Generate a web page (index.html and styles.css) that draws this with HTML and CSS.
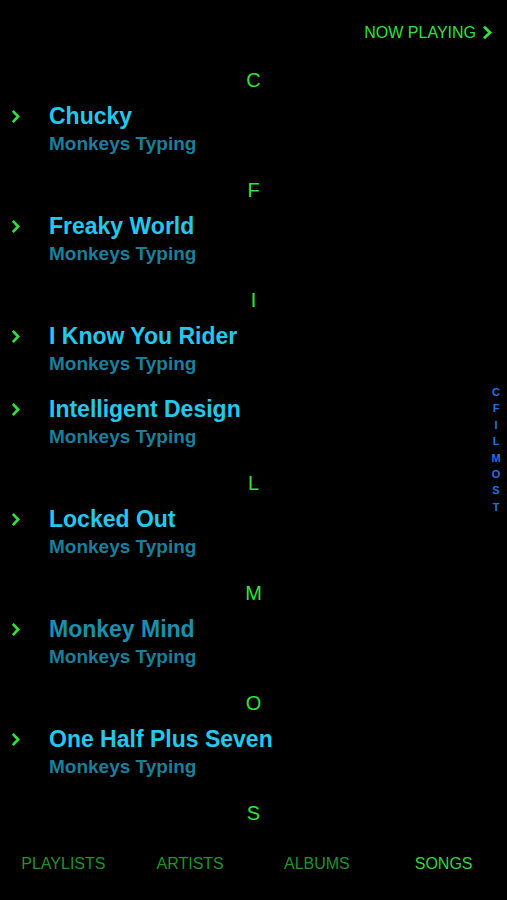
FILE: index.html
```html
<!DOCTYPE html>
<html lang="en">
<head>
  <meta charset="UTF-8" />
  <meta name="viewport" content="width=device-width, initial-scale=1.0"/>
  <title>Songs</title>
  <link rel="stylesheet" href="styles.css">
</head>
<body>
  <div class="screen">
    <div class="topbar">
      <span class="now-playing">NOW PLAYING</span>
      <svg class="top-chevron" width="11" height="15" viewBox="0 0 11 15">
        <path d="M2 1.8 L8 7.5 L2 13.2" fill="none" stroke="#2ee23c" stroke-width="2.8"/>
      </svg>
    </div>

    <div class="list">
      <div class="section-head">C</div>
      <div class="row">
        <svg class="chevron" width="10" height="15" viewBox="0 0 10 15"><path d="M1.8 1.8 L7.2 7.5 L1.8 13.2"/></svg>
        <div class="info">
          <div class="title">Chucky</div>
          <div class="artist">Monkeys Typing</div>
        </div>
      </div>

      <div class="section-head">F</div>
      <div class="row">
        <svg class="chevron" width="10" height="15" viewBox="0 0 10 15"><path d="M1.8 1.8 L7.2 7.5 L1.8 13.2"/></svg>
        <div class="info">
          <div class="title">Freaky World</div>
          <div class="artist">Monkeys Typing</div>
        </div>
      </div>

      <div class="section-head">I</div>
      <div class="row">
        <svg class="chevron" width="10" height="15" viewBox="0 0 10 15"><path d="M1.8 1.8 L7.2 7.5 L1.8 13.2"/></svg>
        <div class="info">
          <div class="title">I Know You Rider</div>
          <div class="artist">Monkeys Typing</div>
        </div>
      </div>
      <div class="row">
        <svg class="chevron" width="10" height="15" viewBox="0 0 10 15"><path d="M1.8 1.8 L7.2 7.5 L1.8 13.2"/></svg>
        <div class="info">
          <div class="title">Intelligent Design</div>
          <div class="artist">Monkeys Typing</div>
        </div>
      </div>

      <div class="section-head">L</div>
      <div class="row">
        <svg class="chevron" width="10" height="15" viewBox="0 0 10 15"><path d="M1.8 1.8 L7.2 7.5 L1.8 13.2"/></svg>
        <div class="info">
          <div class="title">Locked Out</div>
          <div class="artist">Monkeys Typing</div>
        </div>
      </div>

      <div class="section-head">M</div>
      <div class="row dim">
        <svg class="chevron" width="10" height="15" viewBox="0 0 10 15"><path d="M1.8 1.8 L7.2 7.5 L1.8 13.2"/></svg>
        <div class="info">
          <div class="title">Monkey Mind</div>
          <div class="artist">Monkeys Typing</div>
        </div>
      </div>

      <div class="section-head">O</div>
      <div class="row">
        <svg class="chevron" width="10" height="15" viewBox="0 0 10 15"><path d="M1.8 1.8 L7.2 7.5 L1.8 13.2"/></svg>
        <div class="info">
          <div class="title">One Half Plus Seven</div>
          <div class="artist">Monkeys Typing</div>
        </div>
      </div>

      <div class="section-head">S</div>
    </div>

    <div class="index-wrap">
      <div class="index">
        <span>C</span><span>F</span><span>I</span><span>L</span><span>M</span><span>O</span><span>S</span><span>T</span>
      </div>
    </div>

    <div class="tabbar">
      <div class="tab">PLAYLISTS</div>
      <div class="tab">ARTISTS</div>
      <div class="tab">ALBUMS</div>
      <div class="tab active">SONGS</div>
    </div>
  </div>
</body>
</html>
```

FILE: styles.css
```css
* {
  box-sizing: border-box;
}

body {
  margin: 0;
  background: #000;
  font-family: 'Liberation Sans', Arial, sans-serif;
}

.screen {
  position: relative;
  width: 507px;
  height: 900px;
  overflow: hidden;
  background: #000;
}

.topbar {
  height: 61px;
  display: flex;
  justify-content: flex-end;
  align-items: center;
  padding: 4px 14px 0 0;
}

.now-playing {
  color: #2ee23c;
  font-size: 16px;
  line-height: 20px;
}

.top-chevron {
  margin-left: 6px;
}

.list {
  height: 777px;
  overflow: hidden;
}

.section-head {
  height: 37px;
  line-height: 39px;
  text-align: center;
  color: #2ee23c;
  font-size: 20px;
}

.row {
  height: 73px;
  display: flex;
  align-items: flex-start;
  padding-top: 4px;
}

.chevron {
  margin: 7px 0 0 11px;
  flex-shrink: 0;
}

.chevron path {
  fill: none;
  stroke: #2ee23c;
  stroke-width: 2.6;
}

.info {
  margin-left: 28px;
}

.title {
  color: #22c8ee;
  font-size: 23px;
  font-weight: bold;
  line-height: 28px;
}

.artist {
  color: #1a7f9c;
  font-size: 19px;
  font-weight: bold;
  line-height: 27px;
}

.row.dim .title {
  color: #1a8fb0;
}

.index-wrap {
  position: absolute;
  top: 61px;
  bottom: 62px;
  right: 3px;
  width: 16px;
  display: flex;
  align-items: center;
  justify-content: center;
}

.index {
  display: flex;
  flex-direction: column;
  align-items: center;
}

.index span {
  color: #2072e4;
  font-size: 11px;
  font-weight: bold;
  line-height: 16.4px;
}

.tabbar {
  height: 62px;
  display: grid;
  grid-template-columns: repeat(4, 1fr);
  background: #000;
  padding-top: 16px;
}

.tab {
  text-align: center;
  color: #1e932a;
  font-size: 16px;
  line-height: 20px;
}

.tab.active {
  color: #2ed83c;
}
```
